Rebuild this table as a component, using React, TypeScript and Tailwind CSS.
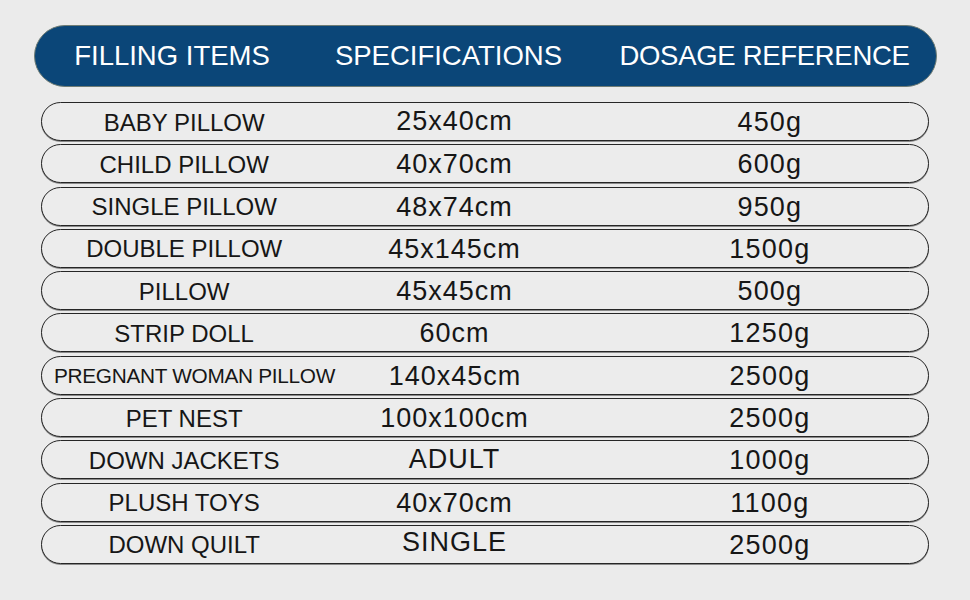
const rows = [
  { item: "BABY PILLOW", spec: "25x40cm", dose: "450g", specNudge: "-mt-[3px]" },
  { item: "CHILD PILLOW", spec: "40x70cm", dose: "600g" },
  { item: "SINGLE PILLOW", spec: "48x74cm", dose: "950g" },
  { item: "DOUBLE PILLOW", spec: "45x145cm", dose: "1500g" },
  { item: "PILLOW", spec: "45x45cm", dose: "500g" },
  { item: "STRIP DOLL", spec: "60cm", dose: "1250g" },
  { item: "PREGNANT WOMAN PILLOW", spec: "140x45cm", dose: "2500g", small: true },
  { item: "PET NEST", spec: "100x100cm", dose: "2500g" },
  { item: "DOWN JACKETS", spec: "ADULT", dose: "1000g", specNudge: "-mt-[3px]" },
  { item: "PLUSH TOYS", spec: "40x70cm", dose: "1100g" },
  { item: "DOWN QUILT", spec: "SINGLE", dose: "2500g", specNudge: "-mt-[5px]" },
];

export default function App() {
  return (
    <div
      className="w-[970px] h-[600px] bg-[#ebebeb] overflow-hidden pt-[25px]"
      style={{ fontFamily: '"Liberation Sans", Arial, sans-serif' }}
    >
      {/* Header bar */}
      <div className="ml-[34px] w-[903px] h-[62px] rounded-full bg-[#0b4678] border border-[#6f7c74] flex items-center text-white text-[27.5px] leading-none whitespace-nowrap">
        <div className="w-[274px] text-center">FILLING ITEMS</div>
        <div className="w-[279px] text-center">SPECIFICATIONS</div>
        <div className="flex-1 text-center pl-[5px] tracking-[-0.3px]">DOSAGE REFERENCE</div>
      </div>

      {/* Rows */}
      <div className="ml-[41px] w-[888px] mt-[15px] flex flex-col gap-[3.3px]">
        {rows.map((r) => (
          <div
            key={r.item + r.dose}
            className="h-[39px] pt-[2px] rounded-full border border-[#262626] shadow-[0_1px_0_#8a8a8a] bg-[#ececec] flex items-center text-[#161616] leading-none whitespace-nowrap"
          >
            <div className="w-[285px] flex justify-center">
              {r.small ? (
                <span className="ml-[20px] text-[20.8px] tracking-[-0.3px]">{r.item}</span>
              ) : (
                <span className="text-[24px]">{r.item}</span>
              )}
            </div>
            <div className={`w-[257px] text-center text-[27px] tracking-[1px] ${r.specNudge ?? ""}`}>{r.spec}</div>
            <div className="w-[346px] pl-[29px] text-center text-[27px] tracking-[1.2px]">{r.dose}</div>
          </div>
        ))}
      </div>
    </div>
  );
}
